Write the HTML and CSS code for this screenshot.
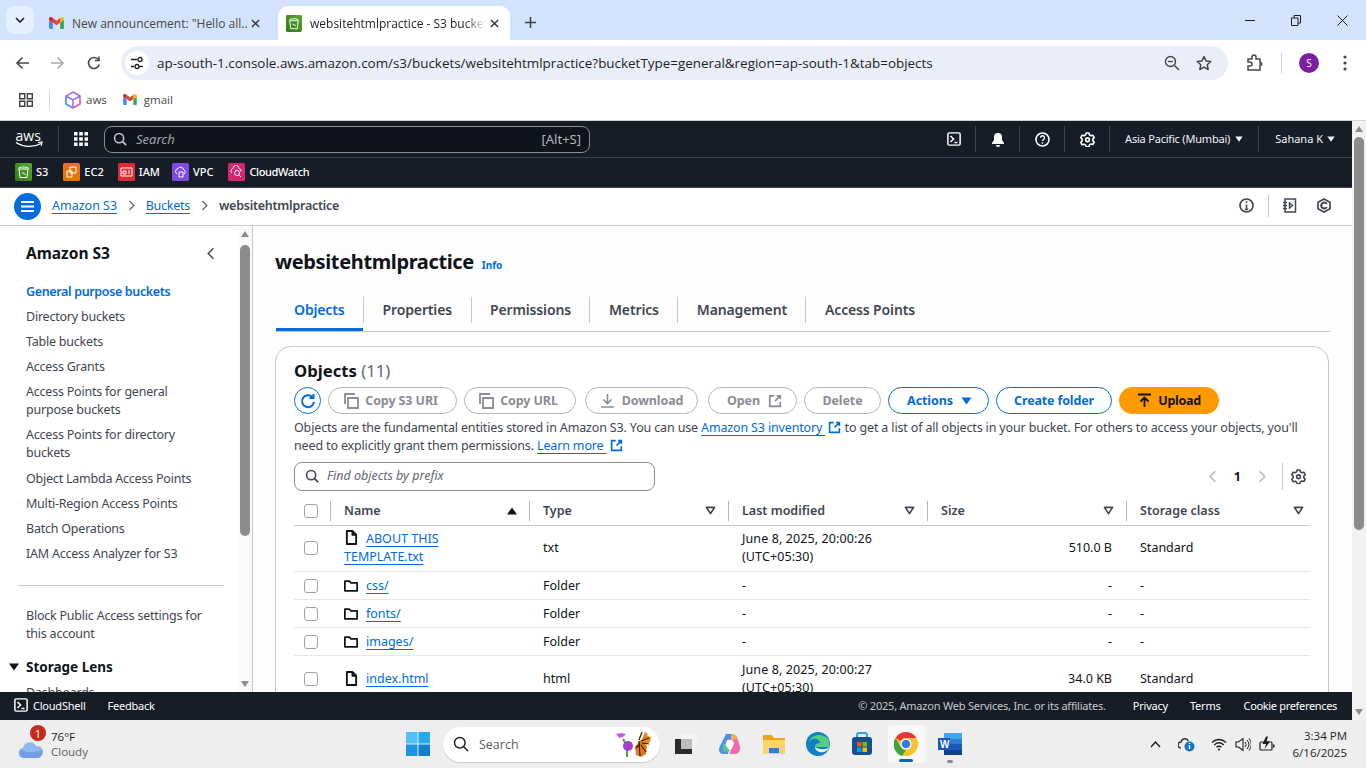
FILE: index.html
```html
<!DOCTYPE html>
<html lang="en">
<head>
<meta charset="utf-8">
<title>websitehtmlpractice - S3 bucket</title>
<link rel="stylesheet" href="styles.css">
</head>
<body>
<svg class="defs" width="0" height="0" aria-hidden="true">
  <defs>
    <symbol id="gmail" viewBox="0 0 16 13">
      <path d="M1 13h3V6L0 3v9a1 1 0 0 0 1 1z" fill="#4285f4"/>
      <path d="M12 13h3a1 1 0 0 0 1-1V3l-4 3z" fill="#34a853"/>
      <path d="M12 1v5l4-3V1.500C16 .2 14.500-.5 13.500.3z" fill="#fbbc04"/>
      <path d="M4 6V1l4 3 4-3v5L8 9z" fill="#ea4335"/>
      <path d="M0 1.500V3l4 3V1L2.500.3C1.500-.5 0 .2 0 1.500z" fill="#c5221f"/>
    </symbol>
    <symbol id="copy" viewBox="0 0 16 16"><path d="M5 5h10v10H5zM2 11V1h10" fill="none" stroke="currentColor" stroke-width="1.800"/></symbol>
    <symbol id="ext" viewBox="0 0 16 16"><path d="M7 2H2v12h12V9M10 2h4v4M14 2L8 8" fill="none" stroke="currentColor" stroke-width="2"/></symbol>
    <symbol id="file" viewBox="0 0 14 16"><path d="M2 1h6l4 4v10H2zM8 1v4h4" fill="none" stroke="currentColor" stroke-width="2" stroke-linejoin="round"/></symbol>
    <symbol id="folder" viewBox="0 0 16 14"><path d="M1 2h5l2 2h7v9H1z" fill="none" stroke="currentColor" stroke-width="2" stroke-linejoin="round"/></symbol>
    <symbol id="gear" viewBox="0 0 16 16"><path d="M6.500 1h3l.5 2 1.700 1 2-.6 1.500 2.600-1.500 1.400v2l1.500 1.400-1.500 2.600-2-.6-1.700 1-.5 2h-3L6 14l-1.700-1-2 .6L.8 11l1.500-1.400v-2L.8 6l1.500-2.600 2 .6L6 3z" fill="none" stroke="currentColor" stroke-width="1.700" stroke-linejoin="round"/><circle cx="8" cy="8.300" r="2" fill="none" stroke="currentColor" stroke-width="1.700"/></symbol>
    <symbol id="term" viewBox="0 0 16 16"><rect x="1" y="1" width="14" height="14" rx="1.500" fill="none" stroke="currentColor" stroke-width="1.700"/><path d="M4 4.500L7.500 8 4 11.500M8.500 12H12" fill="none" stroke="currentColor" stroke-width="1.700"/></symbol>
    <symbol id="search" viewBox="0 0 16 16"><circle cx="7" cy="7" r="5.200" fill="none" stroke="currentColor" stroke-width="1.800"/><path d="M11 11l4 4" stroke="currentColor" stroke-width="2"/></symbol>
    <symbol id="filter" viewBox="0 0 12 10"><path d="M1.500 1.500h9L6 8.500z" fill="none" stroke="currentColor" stroke-width="1.800" stroke-linejoin="round"/></symbol>
    <symbol id="chev" viewBox="0 0 10 16"><path d="M2 1.500L8.500 8 2 14.500" fill="none" stroke="currentColor" stroke-width="1.800"/></symbol>
    <symbol id="caret" viewBox="0 0 10 8"><path d="M0 .5h10L5 7.500z" fill="currentColor"/></symbol>
    <symbol id="x" viewBox="0 0 10 10"><path d="M1 1l8 8M9 1L1 9" stroke="currentColor" stroke-width="1.500"/></symbol>
    <symbol id="s3" viewBox="0 0 17 18"><defs><linearGradient id="gs3" x1="0" y1="1" x2="1" y2="0"><stop offset="0" stop-color="#2f7a1f"/><stop offset="1" stop-color="#5aa82e"/></linearGradient></defs><rect width="17" height="18" rx="1.500" fill="url(#gs3)"/><path d="M4 6h9l-1 8.500H5zM3.500 5.500c0-2 10-2 10 0M7 9.500l3.500 2" fill="none" stroke="#fff"/></symbol>
  </defs>
</svg>

<header class="tabstrip">
  <div class="tab-menu"><svg width="10" height="6" viewBox="0 0 10 6"><path d="M1 1l4 4 4-4" fill="none" stroke="#1f1f1f" stroke-width="1.600"/></svg></div>
  <div class="tab tab-inactive">
    <svg class="tab-icon gm" width="15" height="12"><use href="#gmail"/></svg>
    <span class="tab-title">New announcement: "Hello all...</span>
    <svg class="tab-x" width="9" height="9"><use href="#x"/></svg>
  </div>
  <div class="tab tab-active">
    <svg class="tab-icon" width="16" height="17"><use href="#s3"/></svg>
    <span class="tab-title tab-title-fade">websitehtmlpractice - S3 bucket</span>
    <svg class="tab-x" width="9" height="9"><use href="#x"/></svg>
  </div>
  <svg class="tab-plus" width="11" height="11" viewBox="0 0 11 11"><path d="M5.500 0v11M0 5.500h11" stroke="#3c4043" stroke-width="1.500"/></svg>
  <div class="win-controls">
    <svg width="10" height="10" viewBox="0 0 10 10"><path d="M0 5.500h10" stroke="#1f1f1f"/></svg>
    <svg width="10" height="11" viewBox="0 0 10 11"><path d="M.5 3h6.500v7.500H.5zM3 3V.5h6.500V8H7" fill="none" stroke="#1f1f1f"/></svg>
    <svg width="11" height="11" viewBox="0 0 11 11"><path d="M.5.500l10 10M10.500.500l-10 10" stroke="#1f1f1f"/></svg>
  </div>
</header>

<div class="toolbar">
  <svg class="tb-icon" width="14" height="14" viewBox="0 0 14 14"><path d="M14 7H2M7.500 1.500L2 7l5.500 5.500" fill="none" stroke="#474747" stroke-width="1.600"/></svg>
  <svg class="tb-icon tb-fwd" width="14" height="14" viewBox="0 0 14 14"><path d="M0 7h12M6.500 1.500L12 7l-5.500 5.500" fill="none" stroke="#a8abaf" stroke-width="1.600"/></svg>
  <svg class="tb-icon tb-reload" width="14" height="14" viewBox="0 0 14 14"><path d="M12.300 8.500A5.500 5.500 0 1 1 11 3.200M12 .5v4H8" fill="none" stroke="#474747" stroke-width="1.600"/></svg>
  <div class="omnibox">
    <span class="tune"><svg width="14" height="14" viewBox="0 0 14 14"><path d="M1 3.500h6M1 10.500h3" stroke="#1f1f1f" stroke-width="1.300" fill="none"/><circle cx="10" cy="3.500" r="2" fill="none" stroke="#1f1f1f" stroke-width="1.300"/><circle cx="7" cy="10.500" r="2" fill="none" stroke="#1f1f1f" stroke-width="1.300"/><path d="M9 10.500h4" stroke="#1f1f1f" stroke-width="1.300"/></svg></span>
    <span class="url">ap-south-1.console.aws.amazon.com/s3/buckets/websitehtmlpractice?bucketType=general&amp;region=ap-south-1&amp;tab=objects</span>
    <svg class="omni-zoom" width="16" height="16" viewBox="0 0 16 16"><circle cx="6.500" cy="6.500" r="5" fill="none" stroke="#474747" stroke-width="1.400"/><path d="M10.500 10.500l4.500 4.500" stroke="#474747" stroke-width="1.600"/><path d="M4 6.500h5" stroke="#474747" stroke-width="1.300"/></svg>
    <svg class="omni-star" width="16" height="16" viewBox="0 0 16 16"><path d="M8 1.500l2 4.500 4.800.5-3.600 3.200 1 4.800L8 12.100l-4.200 2.400 1-4.800L1.200 6.500 6 6z" fill="none" stroke="#474747" stroke-width="1.500" stroke-linejoin="round"/></svg>
  </div>
  <svg class="tb-ext" width="18" height="18" viewBox="0 0 18 18"><path d="M3 5h4V3a2 2 0 0 1 4 0v2h4v4h1.500v2H15v5H3v-4h2a2 2 0 0 0 0-4H3z" fill="none" stroke="#474747" stroke-width="1.500"/></svg>
  <span class="tb-sep"></span>
  <span class="avatar">S</span>
  <svg class="tb-dots" width="4" height="16" viewBox="0 0 4 16"><circle cx="2" cy="2" r="1.600" fill="#474747"/><circle cx="2" cy="8" r="1.600" fill="#474747"/><circle cx="2" cy="14" r="1.600" fill="#474747"/></svg>
</div>

<div class="bookmarks">
  <svg width="14" height="14" viewBox="0 0 14 14"><path d="M.7.700h5v5h-5zM8.300.700h5v5h-5zM.7 8.300h5v5h-5zM8.300 8.300h5v5h-5z" fill="none" stroke="#3c4043" stroke-width="1.400"/></svg>
  <span class="bm-sep"></span>
  <span class="bm-item bm-aws">
    <svg width="16" height="18" viewBox="0 0 16 18"><path d="M8 1l7 4v8l-7 4-7-4V5zM1 5l7 4 7-4M8 9v8" fill="none" stroke="#a46be8" stroke-width="1.500"/><path d="M1 5v8l7 4" fill="none" stroke="#4aa8f0" stroke-width="1.500"/><path d="M15 9v4l-7 4" fill="none" stroke="#ee6aa0" stroke-width="1.500"/></svg>
    aws
  </span>
  <span class="bm-item bm-gmail"><svg width="14" height="11"><use href="#gmail"/></svg>gmail</span>
</div>

<div class="console">
  <div class="console-main">
    <nav class="topnav">
      <svg class="aws-logo" width="29" height="18" viewBox="0 0 29 18">
        <text x="0.500" y="10.500" class="aws-word">aws</text>
        <path d="M1 12.500c8 5 18 5 25 1" fill="none" stroke="#fff" stroke-width="1.300"/><path d="M23 12.500l4-.5-.8 3.800" fill="none" stroke="#fff" stroke-width="1.200"/>
      </svg>
      <span class="nav-sep nav-sep-logo"></span>
      <svg class="grid-ic" width="14" height="14" viewBox="0 0 14 14" fill="#fff"><path d="M0 0h3.500v3.500H0zM5.200 0h3.600v3.500H5.200zM10.500 0H14v3.500h-3.500zM0 5.200h3.500v3.600H0zM5.200 5.200h3.600v3.600H5.200zM10.500 5.200H14v3.600h-3.500zM0 10.500h3.500V14H0zM5.200 10.500h3.600V14H5.200zM10.500 10.500H14V14h-3.500z"/></svg>
      <div class="nav-search">
        <svg width="14" height="14"><use href="#search"/></svg>
        <span class="nav-search-ph">Search</span>
        <span class="nav-search-key">[Alt+S]</span>
      </div>
      <div class="nav-right">
        <svg class="nav-ic" width="14" height="14"><use href="#term"/></svg>
        <span class="nav-sep"></span>
        <svg class="nav-ic" width="14" height="15" viewBox="0 0 14 15"><path d="M7 1a4 4 0 0 1 4 4v3l2 3v1H1v-1l2-3V5a4 4 0 0 1 4-4z" fill="#fff"/><path d="M5 13h4a2 2 0 0 1-4 0z" fill="#fff"/></svg>
        <span class="nav-sep"></span>
        <svg class="nav-ic" width="15" height="15" viewBox="0 0 15 15"><circle cx="7.500" cy="7.500" r="6.500" fill="none" stroke="#fff" stroke-width="1.600"/><path d="M5.500 5.800a2 2 0 1 1 3 1.700c-.7.400-1 .8-1 1.500M7.500 10.300v1.500" fill="none" stroke="#fff" stroke-width="1.400"/></svg>
        <span class="nav-sep"></span>
        <svg class="nav-ic" width="15" height="15"><use href="#gear"/></svg>
        <span class="nav-sep"></span>
        <span class="nav-label nav-region">Asia Pacific (Mumbai)<svg width="8" height="6"><use href="#caret"/></svg></span>
        <span class="nav-sep"></span>
        <span class="nav-label nav-user">Sahana K<svg width="8" height="6"><use href="#caret"/></svg></span>
      </div>
    </nav>
    <div class="svcbar">
      <span class="svc svc-s3"><svg width="17" height="18"><use href="#s3"/></svg>S3</span>
      <span class="svc svc-ec2"><svg width="17" height="18" viewBox="0 0 17 18"><rect width="17" height="18" rx="1.500" fill="#e7740f"/><path d="M7 4h6v6H7zM4 8h5v6H4z" fill="none" stroke="#fff"/></svg>EC2</span>
      <span class="svc svc-iam"><svg width="17" height="18" viewBox="0 0 17 18"><rect width="17" height="18" rx="1.500" fill="#dd2b34"/><path d="M3 5h11v8H3zM5 8h3v3H5zM10 8h2M10 10h2" fill="none" stroke="#fff"/></svg>IAM</span>
      <span class="svc svc-vpc"><svg width="17" height="18" viewBox="0 0 17 18"><rect width="17" height="18" rx="1.500" fill="#7f4ae0"/><path d="M5 11a3 3 0 0 1 1-5.500 3 3 0 0 1 5.500 1A2.500 2.500 0 0 1 12 11M7 9h4v5H7z" fill="none" stroke="#fff"/></svg>VPC</span>
      <span class="svc svc-cw"><svg width="17" height="18" viewBox="0 0 17 18"><rect width="17" height="18" rx="1.500" fill="#d9256f"/><path d="M4 10a2.500 2.500 0 0 1 1-4.500 3 3 0 0 1 6 0 2.500 2.500 0 0 1 2 3" fill="none" stroke="#fff"/><circle cx="9" cy="10" r="2.500" fill="none" stroke="#fff"/><path d="M11 12l2 2" stroke="#fff"/></svg>CloudWatch</span>
    </div>
    <div class="crumbs">
      <span class="burger"><svg width="13" height="11" viewBox="0 0 13 11"><path d="M0 1h13M0 5.500h13M0 10h13" stroke="#fff" stroke-width="2"/></svg></span>
      <a class="crumb-link crumb-s3">Amazon S3</a>
      <svg class="crumb-chev" width="7" height="11"><use href="#chev"/></svg>
      <a class="crumb-link crumb-bk">Buckets</a>
      <svg class="crumb-chev" width="7" height="11"><use href="#chev"/></svg>
      <span class="crumb-now">websitehtmlpractice</span>
      <div class="crumb-right">
        <svg width="15" height="15" viewBox="0 0 15 15"><circle cx="7.500" cy="7.500" r="6.500" fill="none" stroke="#424650" stroke-width="1.700"/><path d="M7.500 6.500v5M5.800 11.500h3.400M7.500 3.300v1.800" stroke="#424650" stroke-width="1.600"/></svg>
        <span class="crumb-sep"></span>
        <svg class="cr-b" width="15" height="15" viewBox="0 0 15 15"><path d="M3 1h10.500v13H3zM1 4.500h4M1 7.500h4M1 10.500h4M7.500 5l3 2.500-3 2.500z" fill="none" stroke="#424650" stroke-width="1.500"/></svg>
        <svg class="cr-c" width="14" height="15" viewBox="0 0 14 15"><path d="M7 1l6 3.200v6.600L7 14l-6-3.200V4.200z" fill="none" stroke="#424650" stroke-width="1.700"/><path d="M9.800 6A3 3 0 1 0 9.800 9" fill="none" stroke="#424650" stroke-width="2"/></svg>
      </div>
    </div>

    <div class="workspace">
      <aside class="sidenav">
        <div class="sidenav-inner">
          <div class="side-head"><h2>Amazon S3</h2><svg width="8" height="13"><use href="#chev" class="flip"/></svg></div>
          <ul class="side-list">
            <li class="side-active">General purpose buckets</li>
            <li>Directory buckets</li>
            <li>Table buckets</li>
            <li>Access Grants</li>
            <li>Access Points for general purpose buckets</li>
            <li>Access Points for directory buckets</li>
            <li class="side-nudge">Object Lambda Access Points</li>
            <li>Multi-Region Access Points</li>
            <li>Batch Operations</li>
            <li>IAM Access Analyzer for S3</li>
          </ul>
          <hr class="side-hr">
          <ul class="side-list">
            <li>Block Public Access settings for this account</li>
          </ul>
          <div class="side-group"><svg width="10" height="8"><use href="#caret"/></svg>Storage Lens</div>
          <ul class="side-list side-sub"><li>Dashboards</li></ul>
        </div>
        <div class="sb sb-side">
          <span class="sb-up"></span><span class="sb-thumb"></span><span class="sb-space"></span><span class="sb-down"></span>
        </div>
      </aside>

      <main class="content">
        <div class="title-row"><h1>websitehtmlpractice</h1><a class="info">Info</a></div>
        <div class="tabs">
          <span class="ctab ctab-on">Objects</span>
          <span class="ctab">Properties</span>
          <span class="ctab">Permissions</span>
          <span class="ctab">Metrics</span>
          <span class="ctab">Management</span>
          <span class="ctab ctab-last">Access Points</span>
        </div>
        <section class="card">
          <h2 class="card-title">Objects <span>(11)</span></h2>
          <div class="actions">
            <span class="refresh"><svg width="16" height="16" viewBox="0 0 16 16"><path d="M14 9a6 6 0 1 1-1.800-5.200M13.500 1v4h-4" fill="none" stroke="#006ce0" stroke-width="2"/></svg></span>
            <span class="btn b-s3"><svg width="16" height="16"><use href="#copy"/></svg>Copy S3 URI</span>
            <span class="btn b-url"><svg width="16" height="16"><use href="#copy"/></svg>Copy URL</span>
            <span class="btn b-dl"><svg width="15" height="15" viewBox="0 0 15 15"><path d="M7.500 1v9M3.500 6.500l4 4 4-4M1 14h13" fill="none" stroke="currentColor" stroke-width="1.600"/></svg>Download</span>
            <span class="btn b-open">Open<svg width="14" height="14"><use href="#ext"/></svg></span>
            <span class="btn b-del">Delete</span>
            <span class="btn btn-blue b-act">Actions<svg width="11" height="8"><use href="#caret"/></svg></span>
            <span class="btn btn-blue b-cf">Create folder</span>
            <span class="btn btn-up"><svg width="15" height="15" viewBox="0 0 15 15"><path d="M1 1.500h13M7.500 14V5M3.500 8.500l4-4 4 4" fill="none" stroke="currentColor" stroke-width="1.800"/></svg>Upload</span>
          </div>
          <p class="desc">Objects are the fundamental entities stored in Amazon S3. You can use <a class="lnk">Amazon S3 inventory&nbsp;</a> <svg class="ext-b" width="13" height="13"><use href="#ext"/></svg> to get a list of all objects in your bucket. For others to access your objects, you'll need to explicitly grant them permissions. <a class="lnk">Learn more&nbsp;</a> <svg class="ext-b" width="13" height="13"><use href="#ext"/></svg></p>
          <div class="filter-row">
            <div class="filter"><svg width="14" height="14"><use href="#search"/></svg><span>Find objects by prefix</span></div>
            <div class="pager">
              <svg class="pg-off" width="8" height="13"><use href="#chev" class="flip"/></svg>
              <b>1</b>
              <svg class="pg-off" width="8" height="13"><use href="#chev"/></svg>
              <span class="pg-sep"></span>
              <svg class="pg-gear" width="15" height="15"><use href="#gear"/></svg>
            </div>
          </div>
          <div class="tbl">
            <div class="tr th">
              <div class="td td-check"><span class="check"></span></div>
              <div class="td td-h">Name<svg class="sort" width="10" height="8" viewBox="0 0 10 8"><path d="M5 .5l5 7H0z" fill="#0f141a"/></svg></div>
              <div class="td td-h">Type<svg class="sort" width="11" height="9"><use href="#filter"/></svg></div>
              <div class="td td-h">Last modified<svg class="sort" width="11" height="9"><use href="#filter"/></svg></div>
              <div class="td td-h">Size<svg class="sort" width="11" height="9"><use href="#filter"/></svg></div>
              <div class="td td-h td-h-last">Storage class<svg class="sort" width="11" height="9"><use href="#filter"/></svg></div>
            </div>
            <div class="tr r-tall r-about">
              <div class="td td-check"><span class="check"></span></div>
              <div class="td td-name"><span class="name-wrap"><svg class="ic-file" width="13" height="15"><use href="#file"/></svg><a class="lnk">ABOUT THIS TEMPLATE.txt</a></span></div>
              <div class="td">txt</div>
              <div class="td td-date">June 8, 2025, 20:00:26 (UTC+05:30)</div>
              <div class="td td-num">510.0 B</div>
              <div class="td">Standard</div>
            </div>
            <div class="tr r-short">
              <div class="td td-check"><span class="check"></span></div>
              <div class="td td-name"><svg class="ic-folder" width="14" height="13"><use href="#folder"/></svg><a class="lnk">css/</a></div>
              <div class="td">Folder</div><div class="td">-</div><div class="td td-num">-</div><div class="td">-</div>
            </div>
            <div class="tr r-short">
              <div class="td td-check"><span class="check"></span></div>
              <div class="td td-name"><svg class="ic-folder" width="14" height="13"><use href="#folder"/></svg><a class="lnk">fonts/</a></div>
              <div class="td">Folder</div><div class="td">-</div><div class="td td-num">-</div><div class="td">-</div>
            </div>
            <div class="tr r-short">
              <div class="td td-check"><span class="check"></span></div>
              <div class="td td-name"><svg class="ic-folder" width="14" height="13"><use href="#folder"/></svg><a class="lnk">images/</a></div>
              <div class="td">Folder</div><div class="td">-</div><div class="td td-num">-</div><div class="td">-</div>
            </div>
            <div class="tr r-tall r-index">
              <div class="td td-check"><span class="check"></span></div>
              <div class="td td-name"><svg class="ic-file" width="13" height="15"><use href="#file"/></svg><a class="lnk">index.html</a></div>
              <div class="td">html</div>
              <div class="td td-date">June 8, 2025, 20:00:27 (UTC+05:30)</div>
              <div class="td td-num">34.0 KB</div>
              <div class="td">Standard</div>
            </div>
          </div>
        </section>
      </main>
    </div>

    <footer class="cfooter">
      <svg width="14" height="14"><use href="#term"/></svg>
      <span class="f-cs">CloudShell</span>
      <span class="f-fb">Feedback</span>
      <span class="f-copy">© 2025, Amazon Web Services, Inc. or its affiliates.</span>
      <span class="f-pr">Privacy</span>
      <span class="f-te">Terms</span>
      <span class="f-co">Cookie preferences</span>
    </footer>
  </div>
  <div class="sb sb-page">
    <span class="sb-up"></span><span class="sb-thumb"></span><span class="sb-space"></span><span class="sb-down"></span>
  </div>
</div>

<div class="taskbar">
  <div class="weather">
    <span class="wx-ic">
      <svg width="26" height="22" viewBox="0 0 26 22"><path d="M6 21a5 5 0 0 1-1-10 7 7 0 0 1 13-2 6 6 0 0 1 2 12z" fill="#8db8ee"/><path d="M6 21a5 5 0 0 1-3-8c6 3 14 3 21 0a6 6 0 0 1-4 8z" fill="#6f9fe4"/></svg>
      <span class="wx-badge">1</span>
    </span>
    <span class="wx-text"><span class="wx-t">76°F</span><span class="wx-c">Cloudy</span></span>
  </div>
  <div class="tb-center">
    <svg class="win" width="24" height="24" viewBox="0 0 24 24"><path d="M0 0h11.500v11.500H0z" fill="#4fc3f7"/><path d="M12.500 0H24v11.500H12.500z" fill="#29a8ee"/><path d="M0 12.500h11.500V24H0z" fill="#1d94e0"/><path d="M12.500 12.500H24V24H12.500z" fill="#0f7fd0"/></svg>
    <div class="tsearch">
      <svg width="16" height="16" viewBox="0 0 16 16"><circle cx="6.800" cy="6.800" r="5.300" fill="none" stroke="#1f1f1f" stroke-width="1.500"/><path d="M10.800 10.800l4.200 4.200" stroke="#1f1f1f" stroke-width="1.600"/></svg>
      <span>Search</span>
      <svg class="butterfly" width="37" height="27" viewBox="0 0 37 27">
        <path d="M12 26V14M8 8l4 7" stroke="#5d9440" stroke-width="2" fill="none"/>
        <circle cx="13" cy="15" r="5" fill="#a33fc9"/>
        <path d="M1 3l5-1 5 1-3 3-4 1z" fill="#c35fd8"/>
        <path d="M26 10L30 1l3 2-1 2 4 1-1 5-6 4z" fill="#e88a1a"/>
        <path d="M25 9l-5 7 1 8 5 2 5-3 1-8z" fill="#e07d12"/>
        <path d="M27 1l-3 8M26 10l8-3M24 10l1 15M25 13l-4 4M26 14l5 7M27 12l7 1" stroke="#2e1a06" stroke-width="1.200" fill="none"/>
      </svg>
    </div>
    <div class="tapps">
      <span class="tapp"><svg width="24" height="20" viewBox="0 0 24 20"><path d="M7 0h16v15H7z" fill="#f4f4f4"/><path d="M1 5h17v15H1z" fill="#2b2b2b"/><path d="M7 5h11v10H7z" fill="#bdbdbd"/></svg></span>
      <span class="tapp"><svg width="24" height="24" viewBox="0 0 24 24"><path d="M8 2h6l-4 20H5C1 22 0 18 2 14z" fill="#4f8ff0"/><path d="M14 2c3 0 5 2 6 6l2 7c1 4-2 7-5 7h-5z" fill="#f06ab0"/><path d="M9 8c4-1 7 0 7 4l-3 6c-3 1-6-1-6-4z" fill="#fff"/><path d="M6 11c-2 3-2 6 0 9l6-1z" fill="#54c98a"/><path d="M14 2c3 0 5 2 5 5l-6 1z" fill="#f7b23b"/></svg></span>
      <span class="tapp"><svg width="24" height="24" viewBox="0 0 24 24"><path d="M1 3h9l2 3h11v16H1z" fill="#e8a317"/><path d="M1 8h22v14H1z" fill="#fcd462"/><path d="M7 16h10v5H7z" fill="#2b83d0"/></svg></span>
      <span class="tapp"><svg width="24" height="24" viewBox="0 0 24 24"><circle cx="12" cy="12" r="12" fill="#0f7fc8"/><path d="M3 10C5 3 14 1 20 5c4 3 4 8 3 10H9c0-3 2-4 5-4 0-3-4-5-7-4-2 .6-3 2-4 3z" fill="#52d07f"/><path d="M9 15c0 4 5 6 9 5 3-1 5-3 5-5-3 3-9 3-14 0z" fill="#e9f4fb"/></svg></span>
      <span class="tapp"><svg width="22" height="24" viewBox="0 0 22 24"><path d="M6 6V3a2 2 0 0 1 2-2h6a2 2 0 0 1 2 2v3" fill="none" stroke="#2aa3e8" stroke-width="2"/><rect x="1" y="5" width="20" height="18" rx="3" fill="#17508f"/><path d="M6 10h4.500v4.500H6z" fill="#f25022"/><path d="M11.500 10H16v4.500h-4.500z" fill="#7fba00"/><path d="M6 15.500h4.500V20H6z" fill="#00a4ef"/><path d="M11.500 15.500H16V20h-4.500z" fill="#ffb900"/></svg></span>
      <span class="tapp tapp-on"><svg width="24" height="24" viewBox="0 0 24 24"><circle cx="12" cy="12" r="12" fill="#fbc02d"/><path d="M12 0a12 12 0 0 1 10.400 6H12a6 6 0 0 0-5.200 3L1.600 6A12 12 0 0 1 12 0z" fill="#e53935"/><path d="M1.600 6l5.200 9a6 6 0 0 0 5.200 3l-4 6A12 12 0 0 1 1.600 6z" fill="#43a047"/><circle cx="12" cy="12" r="5.500" fill="#fff"/><circle cx="12" cy="12" r="4.300" fill="#2e7de0"/></svg></span>
      <span class="tapp tapp-run"><svg width="24" height="22" viewBox="0 0 24 22"><path d="M6 0h18v22H6z" fill="#2b7cd3"/><path d="M6 0h18v6H6z" fill="#41a5ee"/><path d="M6 11h18v6H6z" fill="#185abd"/><path d="M6 17h18v5H6z" fill="#103f91"/><rect x="0" y="5" width="12" height="12" fill="#185abd"/><text x="2" y="15" class="word-w">W</text></svg></span>
    </div>
  </div>
  <div class="tray">
    <svg width="11" height="7" viewBox="0 0 11 7"><path d="M1 6l4.500-5L10 6" fill="none" stroke="#1f1f1f" stroke-width="1.400"/></svg>
    <svg class="tr-cloud" width="17" height="16" viewBox="0 0 17 16"><path d="M3 12a3 3 0 0 1 0-6 4 4 0 0 1 7.500-1" fill="none" stroke="#333" stroke-width="1.500"/><circle cx="11.500" cy="10.500" r="5" fill="#1a73c9"/><path d="M11.500 9v4M11.500 7v1" stroke="#fff" stroke-width="1.400"/></svg>
    <svg class="tr-wifi" width="16" height="13" viewBox="0 0 16 13"><path d="M1 4.500c4-4 10-4 14 0M3.200 7c3-2.800 6.600-2.800 9.600 0M5.500 9.300c1.500-1.300 3.500-1.300 5 0" fill="none" stroke="#1f1f1f" stroke-width="1.300"/><circle cx="8" cy="11.500" r="1.100" fill="#1f1f1f"/></svg>
    <svg width="16" height="15" viewBox="0 0 16 15"><path d="M1 5v5h2.500L8 13.500v-12L3.500 5z" fill="none" stroke="#1f1f1f" stroke-width="1.100"/><path d="M10 5a3.500 3.500 0 0 1 0 5M12 3a6.500 6.500 0 0 1 0 9M14 1.500a9 9 0 0 1 0 12" fill="none" stroke="#1f1f1f" stroke-width="1"/></svg>
    <svg class="tr-bat" width="16" height="16" viewBox="0 0 16 16"><rect x="1" y="6" width="12" height="8" rx="1" fill="none" stroke="#1f1f1f" stroke-width="1.200"/><path d="M14 8.500h1.500v3H14" fill="#1f1f1f"/><path d="M7 .5L3.500 8H7l-1.500 5L11 5.500H7.500L9 .5z" fill="#1f1f1f"/></svg>
    <div class="clock"><span>3:34 PM</span><span>6/16/2025</span></div>
  </div>
</div>
</body>
</html>
```

FILE: styles.css
```css
* { box-sizing: border-box; }
html, body { margin: 0; padding: 0; }
body {
  width: 1366px; height: 768px; overflow: hidden;
  display: flex; flex-direction: column;
  font-family: "Noto Sans", "Open Sans", sans-serif;
  background: #fff; color: #0f141a;
}
.defs { position: absolute; }
a { color: inherit; }
h1, h2, p, ul { margin: 0; padding: 0; }
ul { list-style: none; }
svg { flex: none; display: block; }
.flip { transform: scaleX(-1); transform-origin: center; }

/* Browser chrome */
.tabstrip {
  height: 40px; flex: none; background: #d3e3fd;
  display: flex; align-items: flex-end;
  font-family: "Open Sans", sans-serif; font-size: 12px; color: #1f1f1f;
}
.tab-menu {
  width: 28px; height: 28px; margin: 0 2px 6px 6px; border-radius: 8px;
  background: #e6effd; display: flex; align-items: center; justify-content: center;
}
.tab { height: 34px; display: flex; align-items: center; }
.tab-inactive { width: 242px; padding-left: 13px; color: #474747; }
.tab-active { width: 232px; background: #fff; border-radius: 10px 10px 0 0; padding-left: 8px; }
.tab-icon { margin-right: 8px; }
.gm { margin-right: 8px; }
.tab-title { width: 179px; white-space: nowrap; overflow: hidden; }
.tab-inactive .tab-title { width: 176px; }
.tab-title-fade { width: 176px; -webkit-mask-image: linear-gradient(90deg, #000 88%, transparent); mask-image: linear-gradient(90deg, #000 88%, transparent); }
.tab-x { margin-left: 3px; color: #333; }
.tab-active .tab-x { margin-left: 4px; }
.tab-plus { margin: 0 0 12px 15px; }
.win-controls { margin-left: auto; height: 40px; display: flex; align-items: center; padding-right: 18px; gap: 36px; }

.toolbar {
  height: 44px; flex: none; background: #fff; display: flex; align-items: center;
  border-radius: 10px 10px 0 0; padding: 2px 0 0 15px; font-family: "Open Sans", sans-serif;
}
.tb-fwd { margin-left: 22px; }
.tb-reload { margin-left: 22px; }
.omnibox {
  width: 1107px; height: 34px; margin-left: 20px; background: #e9eef9; border-radius: 17px;
  display: flex; align-items: center; padding-left: 4px;
}
.tune { width: 24px; height: 24px; border-radius: 50%; background: #fff; display: flex; align-items: center; justify-content: center; }
.url { margin-left: 8px; font-size: 13.430px; color: #1f1f1f; width: 1000px; white-space: nowrap; }
.omni-zoom { margin-left: auto; }
.omni-star { margin: 0 16px 0 16px; }
.tb-ext { margin-left: 17px; }
.tb-sep { width: 1px; height: 20px; background: #c7d5ee; margin-left: 18px; }
.avatar { width: 20px; height: 20px; border-radius: 50%; background: #7b1fa2; color: #fff; font-size: 10px; display: flex; align-items: center; justify-content: center; margin-left: 17px; }
.tb-dots { margin-left: 24px; }

.bookmarks {
  height: 37px; flex: none; background: #fff; display: flex; align-items: center;
  padding: 0 0 5px 19px; font-family: "Open Sans", sans-serif; font-size: 11.500px; color: #474747;
  border-bottom: 1px solid #d4d4d4;
}
.bm-sep { width: 1px; height: 20px; background: #c7d5ee; margin-left: 16px; }
.bm-item { display: flex; align-items: center; gap: 6px; }
.bm-aws { margin-left: 15px; gap: 5px; }
.bm-gmail { margin-left: 16px; gap: 7px; }

/* Console */
.console { flex: 1; min-height: 0; display: flex; }
.console-main { width: 1352px; display: flex; flex-direction: column; }
.topnav {
  height: 37px; flex: none; background: #161d26; color: #fff; display: flex; align-items: center;
  padding-left: 15px; border-bottom: 1px solid #3d4450;
}
.aws-word { font: 400 14px "Open Sans", sans-serif; fill: #fff; letter-spacing: 0; }
.aws-logo { margin-bottom: 1px; }
.nav-sep { width: 1px; height: 26px; background: #3d4450; }
.nav-sep-logo { margin-left: 14px; }
.grid-ic { margin-left: 15px; }
.nav-search {
  width: 486px; height: 27px; margin-left: 16px; border: 1px solid #8c8c94; border-radius: 8px;
  background: #0f141a; display: flex; align-items: center; padding: 0 8px 1px; color: #c6c6cd; font-size: 13px;
}
.nav-search-ph { font-style: italic; margin-left: 9px; color: #a0a5ad; }
.nav-search-key { margin-left: auto; color: #b4b4bb; }
.nav-right { margin-left: auto; display: flex; align-items: center; font-size: 11px; }
.nav-ic { margin: 0 14.500px; }
.nav-label { display: flex; align-items: center; white-space: nowrap; color: #f3f3f7; padding-bottom: 2px; }
.nav-label svg { margin-left: 5px; margin-top: 2px; color: #f3f3f7; }
.nav-region { padding-left: 15px; padding-right: 15px; letter-spacing: -.2px; }
.nav-user { padding-left: 16px; padding-right: 17px; }
.nav-user svg { margin-left: 4px; }

.svcbar {
  height: 30px; flex: none; background: #161d26; color: #fff; display: flex; align-items: center;
  padding: 0 0 2px 15px; font-size: 11px; font-weight: 500;
  border-bottom: 1px solid #3d4450;
}
.svc { display: flex; align-items: center; gap: 4px; }
.svc-ec2 { margin-left: 15px; }
.svc-iam { margin-left: 14px; }
.svc-vpc { margin-left: 12px; }
.svc-cw { margin-left: 15px; letter-spacing: -.35px; }

.crumbs {
  height: 38px; flex: none; background: #fff; border-bottom: 1px solid #c6c6cd;
  display: flex; align-items: center; padding: 0 0 2px 14px; font-size: 12.500px;
}
.burger { width: 27px; height: 27px; margin-top: 2px; border-radius: 50%; background: #006ce0; display: flex; align-items: center; justify-content: center; }
.crumb-link { color: #006ce0; text-decoration: underline; text-underline-offset: 3px; }
.crumb-s3 { margin-left: 11px; }
.crumb-bk { letter-spacing: -.25px; margin-left: -.5px; }
.crumb-chev { margin: 0 11px 0 11px; color: #656871; }
.crumb-now { font-weight: 600; color: #424650; letter-spacing: -.25px; }
.crumb-right { margin-left: auto; display: flex; align-items: center; padding-right: 21px; }
.crumb-sep { width: 1px; height: 22px; background: #c6c6cd; margin-left: 14px; }
.cr-b { margin-left: 13px; }
.cr-c { margin-left: 20px; }

.workspace { flex: 1; min-height: 0; display: flex; overflow: hidden; }
.sidenav { width: 253px; flex: none; display: flex; border-right: 1px solid #c6c6cd; background: #fff; }
.sidenav-inner { width: 238px; overflow: hidden; font-size: 12.500px; color: #424650; }
.side-head { display: flex; align-items: center; justify-content: space-between; padding: 17px 23px 0 26px; height: 37px; color: #0f141a; }
.side-head h2 { font-size: 15.500px; font-weight: 700; }
.side-head svg { color: #424650; }
.side-list { display: flex; flex-direction: column; gap: 7px; padding: 20px 24px 0 26px; line-height: 18px; letter-spacing: -.22px; }
.side-active { color: #006ce0; font-weight: 600; letter-spacing: -.35px; }
.side-nudge { margin-top: 1px; }
.side-hr { border: 0; border-top: 1px solid #c6c6cd; margin: 22px 14px 0 18px; }
.side-hr + .side-list { padding-top: 21px; }
.side-group { display: flex; align-items: center; font-weight: 700; color: #0f141a; font-size: 13.500px; padding: 15px 0 0 9px; line-height: 18px; gap: 7px; }
.side-sub { padding-top: 8px; }

.sb { display: flex; flex-direction: column; align-items: center; background: #f1f1f1; }
.sb-side { width: 14px; background: #fafafa; }
.sb-page { width: 14px; }
.sb-up, .sb-down { width: 0; height: 0; border-left: 4.500px solid transparent; border-right: 4.500px solid transparent; flex: none; }
.sb-up { border-bottom: 6px solid #8b8b8b; margin: 5px 0 5px; }
.sb-down { border-top: 6px solid #8b8b8b; margin: 0 0 5px; }
.sb-thumb { width: 10px; border-radius: 5px; background: #8b8b8b; flex: none; }
.sb-side .sb-thumb { height: 291px; margin-top: 3px; }
.sb-page .sb-thumb { height: 393px; }
.sb-space { flex: 1; }

.content { flex: 1; min-width: 0; padding: 0 22px; background: #fdfdfd; overflow: hidden; }
.title-row { height: 71px; display: flex; align-items: center; }
.title-row h1 { font-size: 20px; font-weight: 700; letter-spacing: -.37px; }
.info { margin-left: 8px; margin-top: 7px; font-size: 10px; font-weight: 700; color: #006ce0; }
.tabs { height: 35px; display: flex; border-bottom: 1px solid #c6c6cd; align-items: flex-start; font-size: 14px; font-weight: 600; color: #424650; letter-spacing: -.14px; }
.ctab { height: 26px; padding: 0 18.500px 2px; border-right: 1px solid #c6c6cd; display: flex; align-items: center; }
.ctab-last { border-right: 0; }
.ctab-on { color: #006ce0; margin-left: 1px; height: 34px; padding: 0 18.500px 10px 18px; border-right: 0; box-shadow: inset 0 -3px 0 #006ce0; }
.ctab-on + .ctab { border-left: 1px solid #c6c6cd; }
.card { margin-top: 14px; border: 1px solid #c6c6cd; border-radius: 16px; padding: 12px 18px; width: 1054px; background: #fff; height: 600px; }
.card-title { font-size: 16.700px; font-weight: 700; line-height: 24px; }
.card-title span { font-weight: 400; color: #656871; }
.actions { display: flex; gap: 7px; margin-top: 4px; height: 28px; font-size: 12.500px; font-weight: 700; letter-spacing: -.1px; }
.refresh { width: 27px; height: 27px; border: 1.500px solid #006ce0; border-radius: 50%; display: flex; align-items: center; justify-content: center; }
.btn { height: 27px; border: 1px solid #b4b4bb; border-radius: 14px; color: #8c8c94; display: flex; align-items: center; justify-content: center; gap: 7px; white-space: nowrap; }
.b-s3 { width: 129px; gap: 6px; padding-right: 4px; }
.b-url { width: 112px; gap: 6px; padding-right: 4px; }
.b-dl { width: 113px; margin-left: 2px; }
.b-open { width: 89px; margin-left: 3px; padding-left: 4px; gap: 8px; }
.b-del { width: 77px; }
.btn-blue { border-color: #006ce0; border-width: 1.500px; color: #006ce0; }
.b-act { width: 101px; gap: 8px; padding-left: 2px; }
.b-cf { width: 116px; letter-spacing: -.15px; }
.btn-up { width: 100px; background: #ff9900; border: 0; color: #0f141a; letter-spacing: -.3px; gap: 6px; }
.desc { margin-top: 4px; width: 1020px; font-size: 12.500px; line-height: 18px; color: #424650; letter-spacing: -.15px; }
.lnk { color: #006ce0; text-decoration: underline; text-underline-offset: 3px; }
.ext-b { display: inline-block; color: #006ce0; vertical-align: -2px; }
.filter-row { display: flex; align-items: center; margin-top: 6px; height: 30px; }
.filter { width: 361px; height: 29px; border: 1px solid #8c8c94; border-radius: 8px; display: flex; align-items: center; padding: 0 0 1px 10px; gap: 8px; font-size: 12.500px; font-style: italic; color: #656871; }
.filter svg { color: #424650; }
.pager { margin-left: auto; display: flex; align-items: center; padding-right: 4px; font-size: 12.500px; }
.pg-off { color: #b4b4bb; }
.pager b { margin: 0 17px; font-weight: 700; color: #0f141a; }
.pg-sep { width: 1px; height: 27px; background: #c6c6cd; margin-left: 16px; }
.pg-gear { margin-left: 8px; color: #424650; }

.tbl { margin-top: 6px; font-size: 12.500px; color: #0f141a; }
.tr { display: grid; grid-template-columns: 36px 199px 199px 199px 199px 184px; border-bottom: 1px solid #e5e5ea; align-items: center; }
.th { height: 29px; padding-bottom: 1px; border-bottom: 1px solid #c6c6cd; font-weight: 600; color: #424650; }
.r-tall { height: 46px; }
.r-about { padding-bottom: 2px; }
.r-short { height: 28px; }
.r-index { height: 45px; border-bottom: 0; }
.td { padding: 0 14px; line-height: 18px; }
.td-check { padding: 0 0 0 10px; display: flex; }
.check { width: 14px; height: 14px; border: 1px solid #a0a0a8; border-radius: 3px; background: #fff; }
.td-h { height: 20px; display: flex; align-items: center; justify-content: space-between; border-left: 1px solid #b4b4bb; padding: 0 12px 0 13px; line-height: 20px; }
.td-h-last { padding-right: 6px; }
.sort { color: #424650; }
.td-name { display: flex; align-items: center; }
.name-wrap { display: block; width: 170px; }
.name-wrap .ic-file { display: inline-block; vertical-align: -2px; margin-right: 8px; }
.ic-file { margin: 0 8px 0 1px; color: #0f141a; }
.ic-folder { margin-right: 8px; color: #0f141a; }
.td-date { width: 170px; letter-spacing: .1px; }
.td-num { text-align: right; }

.cfooter {
  height: 28px; flex: none; background: #161d26; color: #fff; font-size: 11px; letter-spacing: -.22px;
  display: flex; align-items: center; padding: 0 0 2px 14px; white-space: nowrap;
}
.f-cs { margin-left: 5px; }
.f-fb { margin-left: 22px; }
.f-copy { margin-left: auto; color: #c6c6cd; }
.f-pr { margin-left: 27px; }
.f-te { margin-left: 22px; }
.f-co { margin: 0 15px 0 23px; letter-spacing: -.33px; }

/* Windows taskbar */
.taskbar {
  height: 48px; flex: none; background: #eeeeee; display: flex; align-items: center;
  font-family: "Open Sans", sans-serif; font-size: 12px; color: #1f1f1f;
}
.weather { display: flex; align-items: center; width: 406px; padding-left: 18px; }
.wx-ic { position: relative; width: 26px; height: 30px; display: flex; align-items: flex-end; }
.wx-badge { position: absolute; left: 12px; top: -4px; width: 16px; height: 16px; border-radius: 50%; background: #c42b1c; color: #fff; font-size: 11px; display: flex; align-items: center; justify-content: center; }
.wx-text { display: flex; flex-direction: column; margin-left: 7px; font-size: 11.500px; line-height: 15px; margin-top: -1px; }
.wx-c { color: #5c5c5c; }
.tb-center { display: flex; align-items: center; }
.tsearch { width: 217px; height: 35px; margin-left: 13px; background: #fff; border-radius: 18px; display: flex; align-items: center; padding-left: 10px; box-shadow: 0 1px 1px #c9c9c9; font-size: 12.500px; color: #5c5c5c; }
.tsearch span { margin-left: 10px; }
.butterfly { margin-left: auto; margin-right: 8px; }
.tapps { display: flex; align-items: center; margin-left: 4px; }
.tapp { width: 44px; height: 44px; display: flex; align-items: center; justify-content: center; position: relative; }
.tapp-on { width: 36px; height: 38px; margin: 0 4px; background: #f8f8f8; border-radius: 4px; box-shadow: 3px 0 0 #f4f4f4; }
.tapp-on::after { content: ""; position: absolute; bottom: 1px; left: 11px; width: 14px; height: 3px; border-radius: 2px; background: #0067c0; }
.tapp-run::after { content: ""; position: absolute; bottom: 3px; left: 19px; width: 6px; height: 3px; border-radius: 2px; background: #8a8a8a; }
.word-w { font: 700 10px "Liberation Sans", sans-serif; fill: #fff; }
.tray { margin-left: auto; display: flex; align-items: center; padding-right: 19px; }
.tr-cloud { margin-left: 17px; }
.tr-wifi { margin-left: 16px; margin-right: 8px; }
.tr-bat { margin-left: 8px; }
.clock { display: flex; flex-direction: column; align-items: flex-end; margin-left: 18px; font-size: 11.500px; line-height: 17px; }
```
